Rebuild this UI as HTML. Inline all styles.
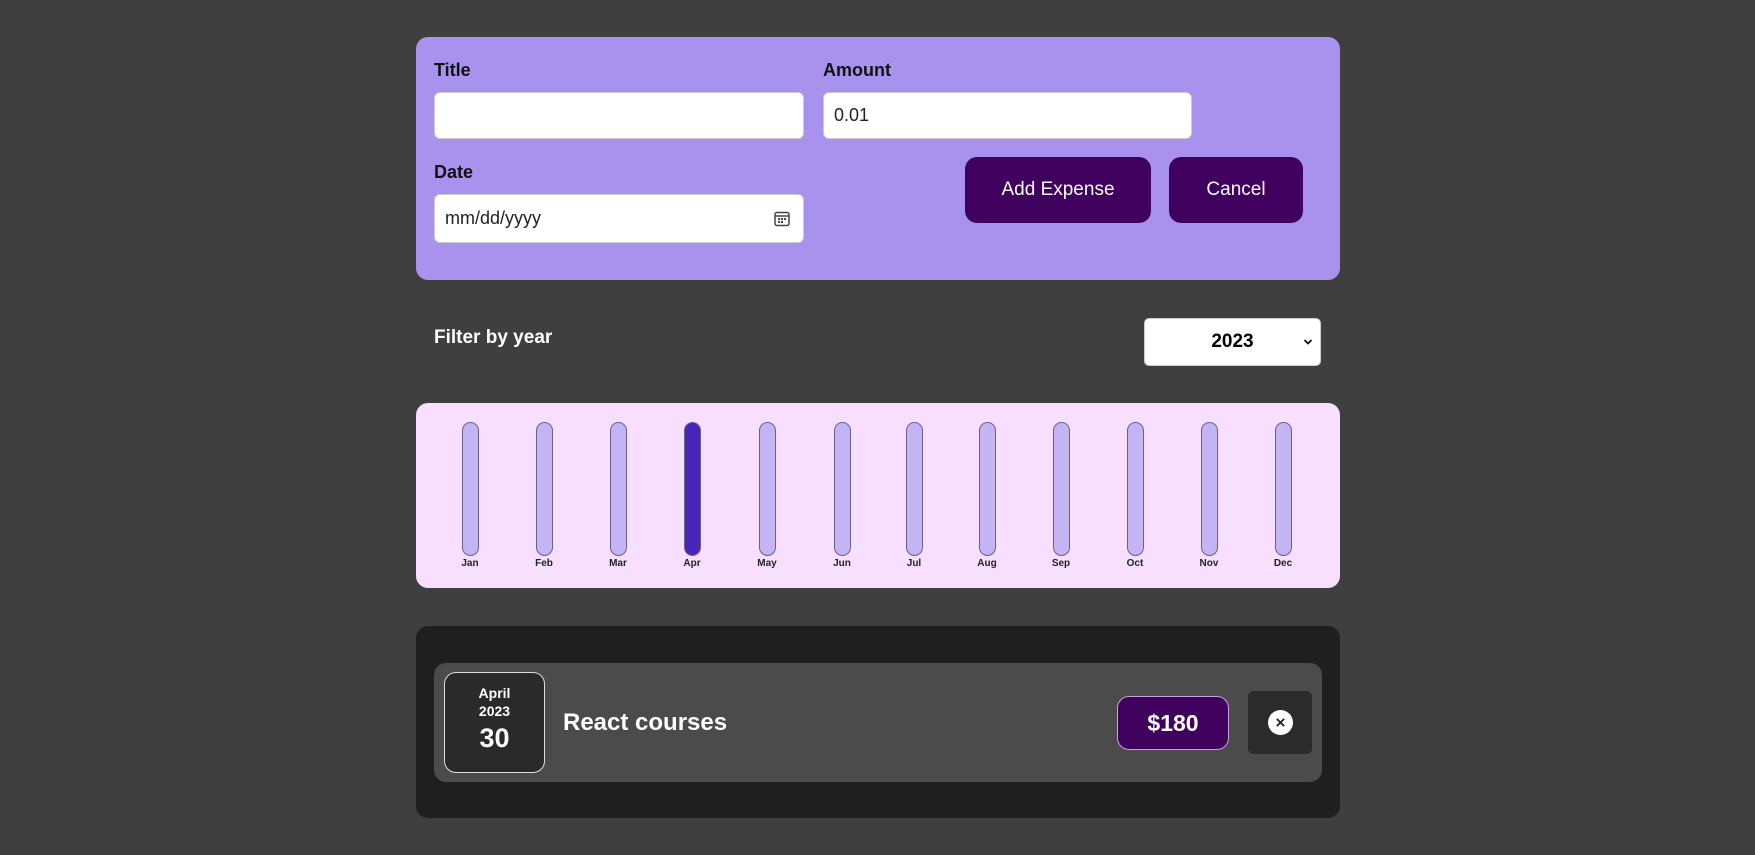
<!DOCTYPE html>
<html><head><style>
*{box-sizing:border-box;margin:0;padding:0}
body{width:1755px;height:855px;background:#3f3f3f;font-family:"Liberation Sans",sans-serif;position:relative;overflow:hidden}
.a{position:absolute}
.card1{left:416px;top:37px;width:924px;height:243px;background:#a892ee;border-radius:12px}
.lbl{font-weight:bold;font-size:18px;color:#111}
.inp{background:#fff;border:1px solid #ccc;border-radius:6px;font-size:18px;color:#222;padding-left:10px;display:flex;align-items:center}
.btn{background:#40005d;color:#fff;border-radius:12px;font-size:19px;display:flex;align-items:center;justify-content:center}
.bar{width:17px;top:422px;height:134px;border:1px solid #6a6090;border-radius:10px;background:#c3b4f3}
.ml{top:558px;font-size:10px;font-weight:bold;color:#222;width:40px;text-align:center}
</style></head><body>
<div class="a card1"></div>
<div class="a lbl" style="left:434px;top:60px">Title</div>
<div class="a lbl" style="left:823px;top:60px">Amount</div>
<div class="a inp" style="left:434px;top:92px;width:370px;height:47px"></div>
<div class="a inp" style="left:823px;top:92px;width:369px;height:47px">0.01</div>
<div class="a lbl" style="left:434px;top:162px">Date</div>
<div class="a inp" style="left:434px;top:194px;width:370px;height:49px">mm/dd/yyyy
<svg class="a" style="left:338px;top:15px" width="18" height="18" viewBox="0 0 18 18"><rect x="2" y="2.5" width="14" height="13" rx="2" fill="none" stroke="#444" stroke-width="1.5"/><line x1="2" y1="6" x2="16" y2="6" stroke="#444" stroke-width="1.5"/><g fill="#444"><rect x="5" y="8" width="2" height="2"/><rect x="8" y="8" width="2" height="2"/><rect x="11" y="8" width="2" height="2"/><rect x="5" y="11" width="2" height="2"/><rect x="8" y="11" width="2" height="2"/></g></svg></div>
<div class="a btn" style="left:965px;top:157px;width:186px;height:66px">Add Expense</div>
<div class="a btn" style="left:1169px;top:157px;width:134px;height:66px">Cancel</div>
<div class="a" style="left:434px;top:327px;color:#fff;font-weight:bold;font-size:19px">Filter by year</div>
<div class="a" style="left:1144px;top:318px;width:177px;height:48px;background:#fff;border-radius:5px;border:1px solid #ccc;font-weight:bold;font-size:19px;display:flex;align-items:center;justify-content:center">2023<svg class="a" style="right:7px;top:19px" width="10" height="8" viewBox="0 0 10 8"><path d="M1.5 2l3.5 3.5 3.5-3.5" fill="none" stroke="#111" stroke-width="1.8"/></svg></div>
<div class="a" style="left:416px;top:403px;width:924px;height:185px;background:#f8dfff;border-radius:12px"></div>
<div class="a bar" style="left:462px"></div>
<div class="a bar" style="left:536px"></div>
<div class="a bar" style="left:610px"></div>
<div class="a bar" style="left:684px;background:#4826b9"></div>
<div class="a bar" style="left:759px"></div>
<div class="a bar" style="left:834px"></div>
<div class="a bar" style="left:906px"></div>
<div class="a bar" style="left:979px"></div>
<div class="a bar" style="left:1053px"></div>
<div class="a bar" style="left:1127px"></div>
<div class="a bar" style="left:1201px"></div>
<div class="a bar" style="left:1275px"></div>
<div class="a ml" style="left:450px">Jan</div>
<div class="a ml" style="left:524px">Feb</div>
<div class="a ml" style="left:598px">Mar</div>
<div class="a ml" style="left:672px">Apr</div>
<div class="a ml" style="left:747px">May</div>
<div class="a ml" style="left:822px">Jun</div>
<div class="a ml" style="left:894px">Jul</div>
<div class="a ml" style="left:967px">Aug</div>
<div class="a ml" style="left:1041px">Sep</div>
<div class="a ml" style="left:1115px">Oct</div>
<div class="a ml" style="left:1189px">Nov</div>
<div class="a ml" style="left:1263px">Dec</div>
<div class="a" style="left:416px;top:626px;width:924px;height:192px;background:#1f1f1f;border-radius:12px"></div>
<div class="a" style="left:434px;top:663px;width:888px;height:119px;background:#4b4b4b;border-radius:12px"></div>
<div class="a" style="left:444px;top:672px;width:101px;height:101px;background:#2a2a2a;border:1px solid #ddd;border-radius:12px;color:#fff;text-align:center;font-weight:bold">
<div style="font-size:14px;margin-top:12px">April</div>
<div style="font-size:14px;margin-top:2px">2023</div>
<div style="font-size:27px;margin-top:4px">30</div></div>
<div class="a" style="left:563px;top:709px;color:#fff;font-weight:bold;font-size:24px">React courses</div>
<div class="a" style="left:1117px;top:696px;width:112px;height:54px;background:#40005d;border:1px solid #c9a0e0;border-radius:12px;color:#fff;font-weight:bold;font-size:23px;display:flex;align-items:center;justify-content:center">$180</div>
<div class="a" style="left:1248px;top:691px;width:64px;height:63px;background:#2b2b2b;border-radius:5px">
<svg class="a" style="left:20px;top:19px" width="25" height="25" viewBox="0 0 24 24"><circle cx="12" cy="12" r="12" fill="#fff"/><path d="M8.5 8.5l7 7M15.5 8.5l-7 7" stroke="#222" stroke-width="1.8"/></svg></div>
</body></html>
